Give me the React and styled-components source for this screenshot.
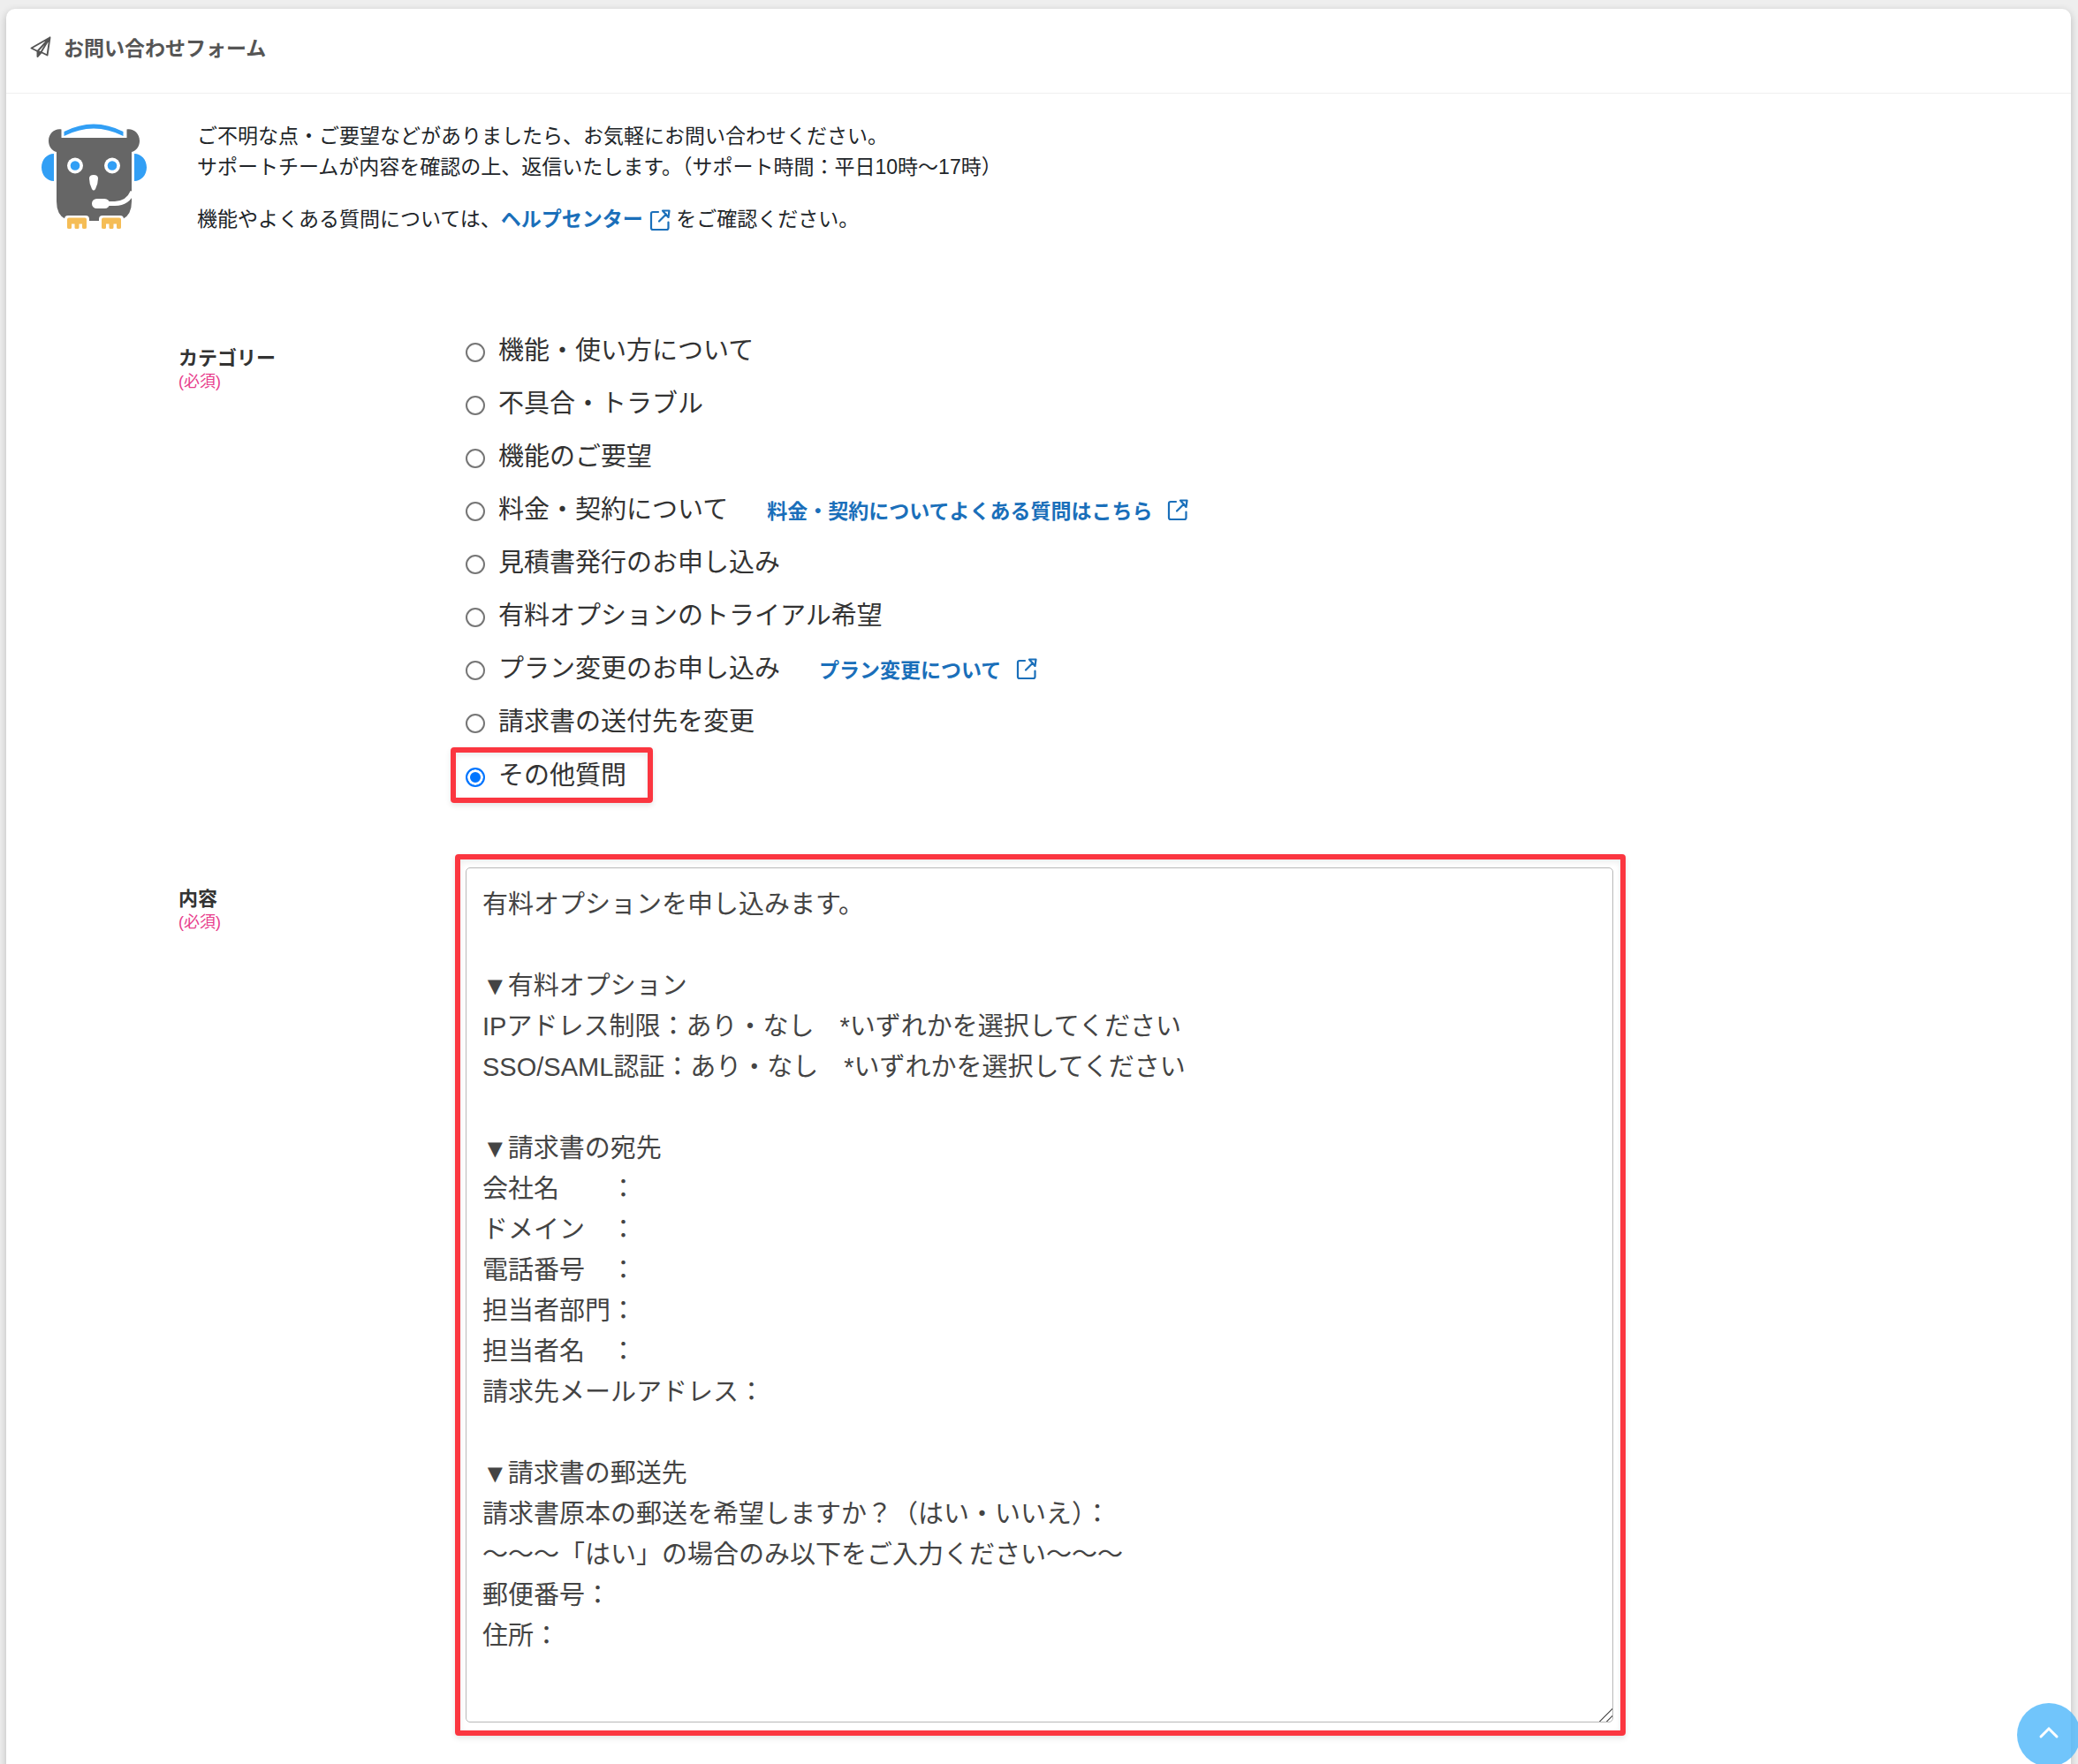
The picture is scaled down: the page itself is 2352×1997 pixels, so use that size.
import React, { useState } from "react";
import styled, { createGlobalStyle } from "styled-components";

const GlobalStyle = createGlobalStyle`
  *, *::before, *::after {
    box-sizing: border-box;
  }
  html, body {
    margin: 0;
    height: 100%;
    overflow: hidden;
  }
  body {
    background: #eeeeee;
    color: #212529;
    font-family: "Liberation Sans", "Noto Sans CJK JP", sans-serif;
    font-size: 23px;
  }
`;

const Page = styled.div`
  padding: 10px 8px 0 7px;
`;

const Card = styled.main`
  min-height: 100vh;
  border-radius: 10px;
  background: #ffffff;
  box-shadow: 0 3px 10px rgba(0, 0, 0, 0.22);
`;

const Header = styled.header`
  display: flex;
  align-items: center;
  gap: 14px;
  height: 96px;
  padding: 0 27px 10px;
  border-bottom: 1px solid #f0f0f0;
  color: #555555;
`;

const Title = styled.h1`
  margin: 0;
  font-size: 23px;
  font-weight: 700;
`;

const Intro = styled.section`
  display: flex;
  gap: 57px;
  padding: 31px 40px 0;
`;

const Mascot = styled.div`
  padding-top: 3px;
`;

const IntroText = styled.div`
  line-height: 35px;
`;

const Paragraph = styled.p`
  margin: 0 0 24px;
`;

const Link = styled.a`
  display: inline-flex;
  align-items: center;
  gap: ${(props) => props.$gap}px;
  color: #1a6fba;
  font-weight: 700;
  text-decoration: none;
`;

const Form = styled.form`
  padding: 77px 40px 0 195px;
`;

const Field = styled.div`
  display: grid;
  grid-template-columns: 301px minmax(0, 1fr);
  align-items: start;
  margin-bottom: 58px;
`;

const FieldLabel = styled.div`
  padding-top: ${(props) => props.$top}px;
  color: #333333;
  font-size: 22px;
  font-weight: 700;
  line-height: 28px;
`;

const Required = styled.span`
  display: block;
  color: #e83e8c;
  font-size: 18px;
  font-weight: 400;
  line-height: 24px;
`;

const Options = styled.div`
  display: flex;
  flex-direction: column;
  align-items: flex-start;
  padding-left: 7px;
`;

const Option = styled.div`
  display: flex;
  align-items: center;
  gap: 44px;
  height: 60px;
  padding: 0 23px 0 11px;
  border: 6px solid transparent;
  border-radius: 4px;
  ${(props) =>
    props.$marked &&
    `
    height: 63px;
    margin-top: -1px;
    padding-right: 24px;
    border-color: #fb3640;
    box-shadow: 0 3px 6px rgba(0, 0, 0, 0.1), inset 0 3px 6px rgba(0, 0, 0, 0.08);
  `}
`;

const OptionLabel = styled.label`
  display: flex;
  align-items: center;
  gap: 15px;
  color: #333333;
  font-size: 29px;
  line-height: 44px;
  white-space: nowrap;
`;

const Radio = styled.input`
  appearance: none;
  flex: none;
  width: 22px;
  height: 22px;
  margin: 4px 0 0;
  border: 2px solid #767676;
  border-radius: 50%;
  background: #ffffff;

  &:checked {
    border-color: #0075ff;
    background: #0075ff;
    box-shadow: inset 0 0 0 3px #ffffff;
  }
`;

const Marker = styled.div`
  width: min(1325px, 100%);
  margin-left: 12px;
  padding: 9px 8px 9px 6px;
  border: 6px solid #fb3640;
  border-radius: 4px;
  box-shadow: 0 3px 6px rgba(0, 0, 0, 0.1), inset 0 3px 6px rgba(0, 0, 0, 0.08);
`;

const TextArea = styled.textarea`
  display: block;
  width: 100%;
  height: 968px;
  padding: 18px;
  border: 1px solid #b8b8b8;
  border-radius: 5px;
  background: #ffffff;
  color: #444444;
  font-family: inherit;
  font-size: 29px;
  line-height: 46px;
  resize: vertical;
  outline: none;

  &::-webkit-resizer {
    background: linear-gradient(
      135deg,
      transparent 48%,
      #707070 48% 55%,
      transparent 55% 75%,
      #707070 75% 82%,
      transparent 82%
    );
  }
`;

const TopButton = styled.button`
  position: fixed;
  right: -3px;
  bottom: -3px;
  display: flex;
  align-items: center;
  justify-content: center;
  width: 72px;
  height: 72px;
  padding: 0 0 7px;
  border: 0;
  border-radius: 50%;
  background: rgba(77, 182, 250, 0.8);
  color: #ffffff;
  cursor: pointer;
`;

const PlaneIcon = () => (
  <svg width="24" height="24" viewBox="0 0 24 24" fill="none" stroke="currentColor" strokeWidth="1.900" strokeLinejoin="round">
    <path d="M22.500 1.500 1.500 13.500l7 3.500L22.500 1.500 12.500 18l7 3.500z" />
    <path d="M8.500 17v6l4-4.500z" fill="currentColor" />
  </svg>
);

const ExternalIcon = () => (
  <svg width="24" height="26" viewBox="0 0 24 26" fill="none" stroke="currentColor" strokeWidth="2.200" strokeLinecap="round" strokeLinejoin="round">
    <path d="M10 4H4Q2 4 2 6V22Q2 24 4 24H19.500Q21.500 24 21.500 22V15.500" />
    <path d="M11 14.500 19 6.500M15 2.500h7.500L21.500 10z" />
  </svg>
);

const ChevronUp = () => (
  <svg width="24" height="16" viewBox="0 0 24 16" fill="none" stroke="currentColor" strokeWidth="3" strokeLinecap="round">
    <path d="m3 13 9-9 9 9" />
  </svg>
);

const Owl = () => (
  <svg width="119" height="120" viewBox="0 0 119 120" aria-hidden="true">
    <path d="M25.500 9Q59 -8 92.500 9V14Q59 -3 25.500 14z" fill="#329ff5" />
    <path d="M22.500 6.500V16H96.500V6.500C103 5 111 10 111 19.500C111 26 107 31 102 32V88Q102 103 92 108V110H27V108Q17 103 17 88V32C12 31 8 26 8 19.500C8 10 16 5 22.500 6.500" fill="#666" />
    <path d="M14 34v31C6 65 0 58 0 49.500S6 34 14 34M105 34v31c8 0 14-7 14-15.500S113 34 105 34" fill="#329ff5" />
    <circle cx="38" cy="47.500" r="9" fill="#fff" />
    <circle cx="80" cy="47.500" r="9" fill="#fff" />
    <circle cx="38" cy="47.500" r="5.300" fill="#329ff5" />
    <circle cx="80" cy="47.500" r="5.300" fill="#329ff5" />
    <path d="M54 62q0-4 5-4t5 4q0 6-3 12-2 3-4 0-3-6-3-12" fill="#fff" />
    <path d="M75 90.500h8Q98 90 103 77" fill="none" stroke="#fff" strokeWidth="5" />
    <rect x="57" y="85" width="20" height="11" rx="5.500" fill="#fff" />
    <path d="M26 111v-3q0-4 4-4h20q4 0 4 4v3H26zM65 111v-3q0-4 4-4h20q4 0 4 4v3H65z" fill="#fff" />
    <path
      d="M29 117.500V108.500q0-2 2-2h18q2 0 2 2v9q0 1.500-2 1.500h-1q-2 0-2-1.500v-4h-3.500v4q0 1.500-1.500 1.500h-2q-1.500 0-1.500-1.500v-4H34v4q0 1.500-1.500 1.500H31q-2 0-2-1.500zM68 117.500V108.500q0-2 2-2h18q2 0 2 2v9q0 1.500-2 1.500h-1q-2 0-2-1.500v-4h-3.500v4q0 1.500-1.500 1.500h-2q-1.500 0-1.500-1.500v-4H73v4q0 1.500-1.500 1.500H70q-2 0-2-1.500z"
      fill="#f5bd56"
    />
  </svg>
);

const categories = [
  { label: "機能・使い方について" },
  { label: "不具合・トラブル" },
  { label: "機能のご要望" },
  { label: "料金・契約について", link: "料金・契約についてよくある質問はこちら" },
  { label: "見積書発行のお申し込み" },
  { label: "有料オプションのトライアル希望" },
  { label: "プラン変更のお申し込み", link: "プラン変更について" },
  { label: "請求書の送付先を変更" },
  { label: "その他質問", marked: true },
];

const template = `有料オプションを申し込みます。

▼有料オプション
IPアドレス制限：あり・なし　*いずれかを選択してください
SSO/SAML認証：あり・なし　*いずれかを選択してください

▼請求書の宛先
会社名　　：
ドメイン　：
電話番号　：
担当者部門：
担当者名　：
請求先メールアドレス：

▼請求書の郵送先
請求書原本の郵送を希望しますか？（はい・いいえ）：
〜〜〜「はい」の場合のみ以下をご入力ください〜〜〜
郵便番号：
住所：
`;

export default function App() {
  const [category, setCategory] = useState("その他質問");
  const [body, setBody] = useState(template);

  return (
    <Page lang="ja">
      <GlobalStyle />
      <Card>
        <Header>
          <PlaneIcon />
          <Title>お問い合わせフォーム</Title>
        </Header>
        <Intro>
          <Mascot>
            <Owl />
          </Mascot>
          <IntroText>
            <Paragraph>
              ご不明な点・ご要望などがありましたら、お気軽にお問い合わせください。
              <br />
              サポートチームが内容を確認の上、返信いたします。（サポート時間：平日10時〜17時）
            </Paragraph>
            <Paragraph>
              機能やよくある質問については、
              <Link href="#help" $gap={7}>
                ヘルプセンター
                <ExternalIcon />
              </Link>{" "}
              をご確認ください。
            </Paragraph>
          </IntroText>
        </Intro>
        <Form>
          <Field role="radiogroup" aria-labelledby="category-label">
            <FieldLabel id="category-label" $top={25}>
              カテゴリー
              <Required>(必須)</Required>
            </FieldLabel>
            <Options>
              {categories.map(({ label, link, marked }) => (
                <Option key={label} $marked={marked}>
                  <OptionLabel>
                    <Radio
                      type="radio"
                      name="category"
                      value={label}
                      checked={category === label}
                      onChange={() => setCategory(label)}
                    />
                    {label}
                  </OptionLabel>
                  {link && (
                    <Link href="#faq" $gap={17}>
                      {link}
                      <ExternalIcon />
                    </Link>
                  )}
                </Option>
              ))}
            </Options>
          </Field>
          <Field>
            <FieldLabel as="label" htmlFor="body" $top={37}>
              内容
              <Required>(必須)</Required>
            </FieldLabel>
            <Marker>
              <TextArea id="body" value={body} onChange={(e) => setBody(e.target.value)} />
            </Marker>
          </Field>
        </Form>
      </Card>
      <TopButton type="button" aria-label="ページの先頭へ">
        <ChevronUp />
      </TopButton>
    </Page>
  );
}
